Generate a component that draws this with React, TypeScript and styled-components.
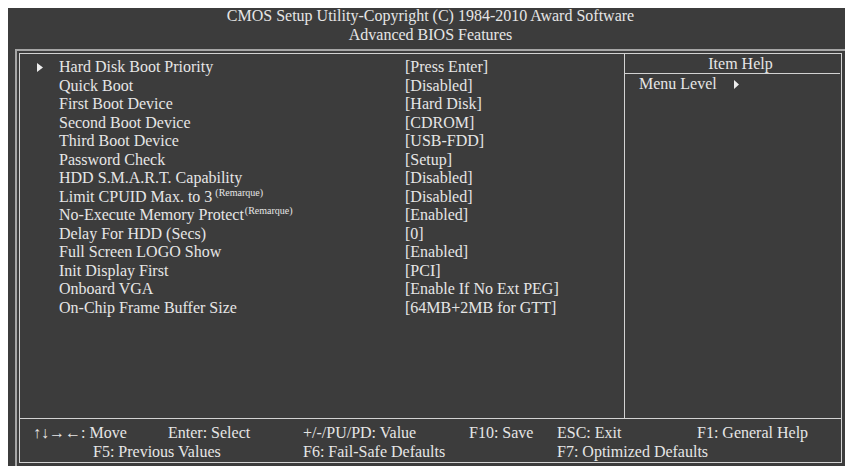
import React from 'react';
import styled, { createGlobalStyle } from 'styled-components';

const Global = createGlobalStyle`
  html { margin: 0; padding: 0; background: #ffffff; }
  body { margin: 0; padding: 0; }
`;

const Screen = styled.div`
  margin: 8px 0 0 8px;
  width: 837px;
  height: 458px;
  background: #3c3c3c;
  color: #e6e6e6;
  font-family: "Liberation Serif", "Times New Roman", serif;
  font-size: 16px;
  display: flex;
  flex-direction: column;
`;

const Title = styled.div`
  flex: 0 0 41px;
  padding-left: 8px;
  text-align: center;
`;

const TitleText = styled.div`
  margin-top: -2px;
  line-height: 19px;
`;

const OuterFrame = styled.div`
  flex: 1;
  margin-left: 7px;
  border-top: 2px solid #a6a6a6;
  border-left: 2px solid #a6a6a6;
  padding: 2px 0 0 2px;
`;

const InnerFrame = styled.div`
  width: 823px;
  height: 410px;
  border: 1px solid #d2d2d2;
  box-sizing: border-box;
  display: flex;
  flex-direction: column;
`;

const Main = styled.div`
  display: flex;
  height: 364px;
  border-bottom: 1px solid #d2d2d2;
`;

const ItemList = styled.div`
  flex: 0 0 604px;
  padding-top: 4px;
  line-height: 18.5px;
`;

const Row = styled.div`
  display: grid;
  grid-template-columns: 39px 346px 1fr;
  align-items: center;
  height: 18.5px;
  white-space: nowrap;
`;

const Marker = styled.span`
  display: flex;
  align-items: center;
  padding-left: 17px;
`;

const Sup = styled.span<{ $gap: number }>`
  font-size: 10px;
  line-height: 0;
  vertical-align: 6px;
  margin-left: ${(p) => p.$gap}px;
`;

const Help = styled.div`
  flex: 1;
  border-left: 1px solid #d2d2d2;
  display: flex;
  flex-direction: column;
`;

const HelpHeader = styled.div`
  height: 19px;
  line-height: 20px;
  text-align: center;
  padding-left: 16px;
  border-bottom: 1px solid #d2d2d2;
  margin-right: 1px;
`;

const HelpLine = styled.div`
  display: flex;
  align-items: center;
  padding-left: 14px;
  padding-top: 1px;
  line-height: 18.5px;
  gap: 17px;
`;

const Footer = styled.div`
  height: 43px;
  padding-top: 4px;
  box-sizing: border-box;
  line-height: 19px;
`;

const FooterRow = styled.div<{ $indent: number }>`
  display: flex;
  padding-left: ${(p) => p.$indent}px;
  white-space: nowrap;
`;

const Key = styled.span<{ $w?: number }>`
  flex: 0 0 ${(p) => (p.$w ? `${p.$w}px` : 'auto')};
`;

const Tri = ({ w = 6, h = 9 }: { w?: number; h?: number }) => (
  <svg width={w} height={h} viewBox={`0 0 ${w} ${h}`}>
    <polygon points={`0,0 ${w},${h / 2} 0,${h}`} fill="#eeeeee" />
  </svg>
);

type Item = { label: string; value: string; sup?: number; marker?: boolean };

const items: Item[] = [
  { label: 'Hard Disk Boot Priority', value: '[Press Enter]', marker: true },
  { label: 'Quick Boot', value: '[Disabled]' },
  { label: 'First Boot Device', value: '[Hard Disk]' },
  { label: 'Second Boot Device', value: '[CDROM]' },
  { label: 'Third Boot Device', value: '[USB-FDD]' },
  { label: 'Password Check', value: '[Setup]' },
  { label: 'HDD S.M.A.R.T. Capability', value: '[Disabled]' },
  { label: 'Limit CPUID Max. to 3', value: '[Disabled]', sup: 3 },
  { label: 'No-Execute Memory Protect', value: '[Enabled]', sup: 1 },
  { label: 'Delay For HDD (Secs)', value: '[0]' },
  { label: 'Full Screen LOGO Show', value: '[Enabled]' },
  { label: 'Init Display First', value: '[PCI]' },
  { label: 'Onboard VGA', value: '[Enable If No Ext PEG]' },
  { label: 'On-Chip Frame Buffer Size', value: '[64MB+2MB for GTT]' },
];

export default function App() {
  return (
    <>
      <Global />
      <Screen>
        <Title>
          <TitleText>
            <div>CMOS Setup Utility-Copyright (C) 1984-2010 Award Software</div>
            <div>Advanced BIOS Features</div>
          </TitleText>
        </Title>
        <OuterFrame>
          <InnerFrame>
            <Main>
              <ItemList>
                {items.map((it) => (
                  <Row key={it.label}>
                    <Marker>{it.marker ? <Tri /> : null}</Marker>
                    <span>
                      {it.label}
                      {it.sup !== undefined ? <Sup $gap={it.sup}>(Remarque)</Sup> : null}
                    </span>
                    <span>{it.value}</span>
                  </Row>
                ))}
              </ItemList>
              <Help>
                <HelpHeader>Item Help</HelpHeader>
                <HelpLine>
                  <span>Menu Level</span>
                  <Tri w={5} h={9} />
                </HelpLine>
              </Help>
            </Main>
            <Footer>
              <FooterRow $indent={13}>
                <Key $w={135}>↑↓→←: Move</Key>
                <Key $w={135}>Enter: Select</Key>
                <Key $w={166}>+/-/PU/PD: Value</Key>
                <Key $w={88}>F10: Save</Key>
                <Key $w={140}>ESC: Exit</Key>
                <Key>F1: General Help</Key>
              </FooterRow>
              <FooterRow $indent={73}>
                <Key $w={210}>F5: Previous Values</Key>
                <Key $w={254}>F6: Fail-Safe Defaults</Key>
                <Key>F7: Optimized Defaults</Key>
              </FooterRow>
            </Footer>
          </InnerFrame>
        </OuterFrame>
      </Screen>
    </>
  );
}
